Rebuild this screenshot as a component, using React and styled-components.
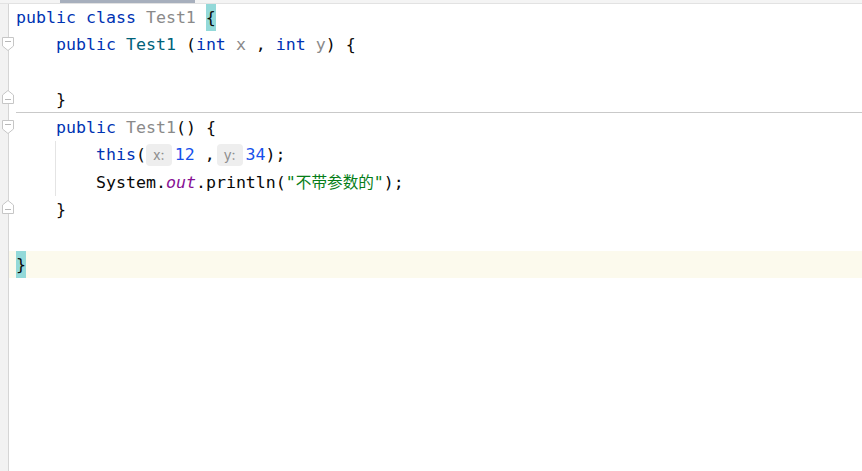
import React from "react";
import styled, { createGlobalStyle } from "styled-components";

const GlobalStyle = createGlobalStyle`
  html, body {
    margin: 0;
    padding: 0;
    background: #ffffff;
  }
`;

const LINE = 27.4;

const Page = styled.div`
  display: flex;
  flex-direction: column;
  height: 100vh;
  overflow: hidden;
`;

const TopStrip = styled.div`
  height: 3px;
  flex-shrink: 0;
  background: #f4f4f4;
  border-bottom: 1px solid #e2e2e2;
  display: flex;
`;

const Thumb = styled.div`
  margin-left: 60px;
  width: 135px;
  background: #a7afbd;
`;

const Editor = styled.div`
  flex: 1;
  display: flex;
`;

const Gutter = styled.div`
  width: 8px;
  flex-shrink: 0;
  background: #f2f2f2;
  border-right: 1px solid #d5d5d5;
`;

const Lines = styled.div`
  flex: 1;
  font-family: "DejaVu Sans Mono", "Liberation Mono", "Noto Sans CJK SC", monospace;
  font-size: 16.6px;
  color: #080808;
`;

const Line = styled.div`
  position: relative;
  display: flex;
  height: ${LINE}px;
  padding-left: 7px;
  background: ${(p) => (p.$current ? "#fcfaed" : "transparent")};

  ${(p) =>
    p.$separator &&
    `
    &::before {
      content: "";
      position: absolute;
      top: -2px;
      left: 7px;
      right: 0;
      height: 1px;
      background: #c9c9c9;
    }
  `}
`;

const Indent = styled.span`
  flex-shrink: 0;
  width: ${(p) => p.$cols * 10}px;
  background: ${(p) =>
    p.$guide
      ? "linear-gradient(to right, transparent 39px, #e4e4e4 39px, #e4e4e4 40px, transparent 40px)"
      : "none"};
`;

const Code = styled.span`
  white-space: pre;
  line-height: ${LINE}px;
`;

const Kw = styled.span`
  color: #0033b3;
`;

const Unused = styled.span`
  color: #8a8a8a;
`;

const Method = styled.span`
  color: #00627a;
`;

const Num = styled.span`
  color: #1750eb;
`;

const Str = styled.span`
  color: #067d17;
`;

const Cjk = styled.span`
  font-family: "Noto Sans CJK SC", sans-serif;
  font-size: 15.6px;
`;

const StaticField = styled.span`
  color: #871094;
  font-style: italic;
`;

const Brace = styled.span`
  display: inline-block;
  height: ${LINE}px;
  vertical-align: top;
  background: #93d9d9;
`;

const Hint = styled.span`
  display: inline-block;
  height: 22px;
  line-height: 22px;
  padding: 0 7px;
  margin-left: ${(p) => p.$gap || 0}px;
  margin-right: 3px;
  border-radius: 4px;
  background: #eeeeee;
  color: #8e8e8e;
  font-family: Inter, "Noto Sans", sans-serif;
  font-size: 14px;
  vertical-align: middle;
`;

const FoldBox = styled.svg`
  position: absolute;
  left: -7px;
  top: ${(p) => p.$top}px;
`;

const FoldMark = ({ end }) => (
  <FoldBox width="12" height="14" viewBox="0 0 12 14" $top={end ? 4 : 6}>
    {end ? (
      <>
        <path d="M0.5 13.5 H11.5 V5 L6 0.5 L0.5 5 Z" fill="#ffffff" stroke="#c6c6c6" />
        <path d="M3 9.5 H9" stroke="#b8b8b8" />
      </>
    ) : (
      <>
        <path d="M0.5 0.5 H11.5 V9 L6 13.5 L0.5 9 Z" fill="#ffffff" stroke="#c6c6c6" />
        <path d="M3 4.5 H9" stroke="#b8b8b8" />
      </>
    )}
  </FoldBox>
);

const App = () => {
  return (
    <Page>
      <GlobalStyle />
      <TopStrip>
        <Thumb />
      </TopStrip>
      <Editor>
        <Gutter />
        <Lines>
          <Line>
            <Code>
              <Kw>public</Kw> <Kw>class</Kw> <Unused>Test1</Unused> <Brace>{"{"}</Brace>
            </Code>
          </Line>
          <Line>
            <FoldMark />
            <Indent $cols={4} />
            <Code>
              <Kw>public</Kw> <Method>Test1</Method> (<Kw>int</Kw> <Unused>x</Unused> , <Kw>int</Kw>{" "}
              <Unused>y</Unused>) {"{"}
            </Code>
          </Line>
          <Line />
          <Line>
            <FoldMark end />
            <Indent $cols={4} />
            <Code>{"}"}</Code>
          </Line>
          <Line $separator>
            <FoldMark />
            <Indent $cols={4} />
            <Code>
              <Kw>public</Kw> <Unused>Test1</Unused>() {"{"}
            </Code>
          </Line>
          <Line>
            <Indent $cols={8} $guide />
            <Code>
              <Kw>this</Kw>(<Hint>x:</Hint>
              <Num>12</Num> ,<Hint $gap={2}>y:</Hint>
              <Num>34</Num>);
            </Code>
          </Line>
          <Line>
            <Indent $cols={8} $guide />
            <Code>
              System.<StaticField>out</StaticField>.println(
              <Str>
                "<Cjk>不带参数的</Cjk>"
              </Str>
              );
            </Code>
          </Line>
          <Line>
            <FoldMark end />
            <Indent $cols={4} />
            <Code>{"}"}</Code>
          </Line>
          <Line />
          <Line $current>
            <Code>
              <Brace>{"}"}</Brace>
            </Code>
          </Line>
        </Lines>
      </Editor>
    </Page>
  );
};

export default App;
